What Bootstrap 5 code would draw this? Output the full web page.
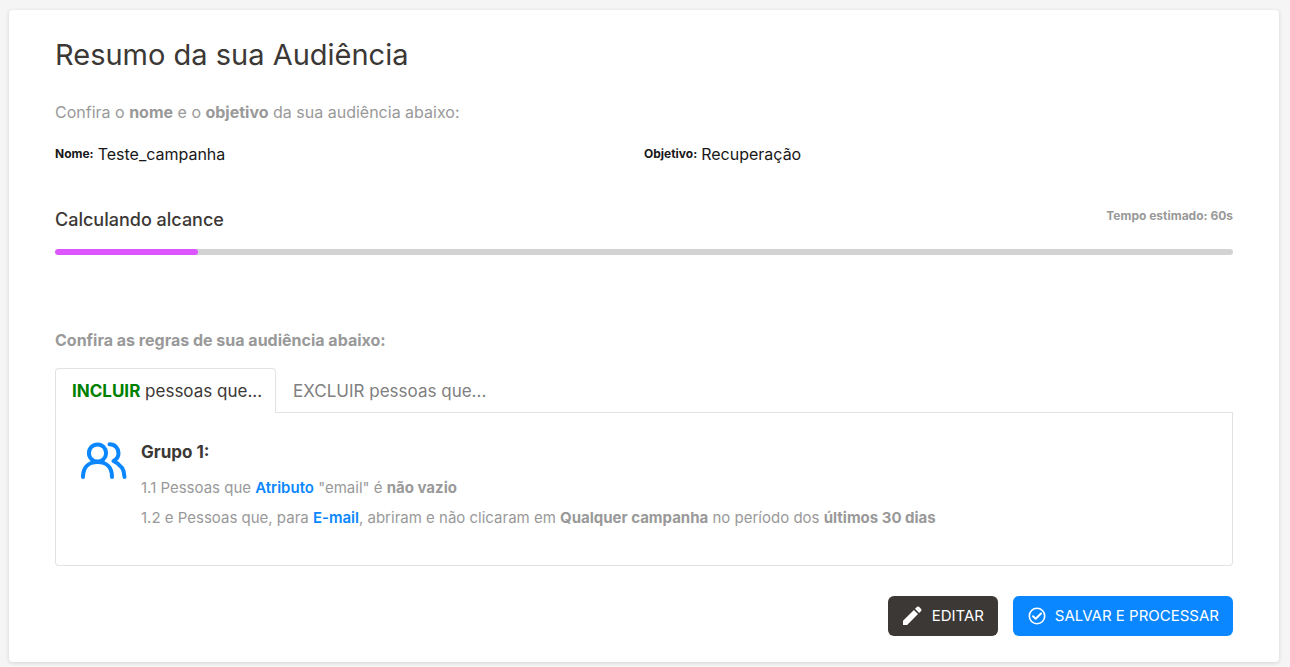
<!DOCTYPE html>
<html lang="pt-BR">
<head>
<meta charset="utf-8">
<meta name="viewport" content="width=device-width, initial-scale=1">
<title>Resumo da sua Audiência</title>
<link href="https://cdn.jsdelivr.net/npm/bootstrap@5.3.0/dist/css/bootstrap.min.css" rel="stylesheet">
<style>
body { background: #f5f5f5; color: #181818; font-family: Inter, "Liberation Sans", sans-serif; font-size: 15px; line-height: 24px; }
.summary { margin: 10px 11px 4px 9px; padding: 27px 46px 26px; border: 0; border-radius: 4px; box-shadow: 0 1px 4px rgba(0, 0, 0, .14); }
.summary h1 { font-size: 29px; line-height: 36px; font-weight: 400; color: #3b3835; margin-bottom: 27px; }
.summary h2 { font-size: 18px; line-height: 24px; font-weight: 500; margin: 0; }
.soft { color: #999; }
.intro { font-size: 16px; margin-bottom: 18px; }
.facts { margin-bottom: 42px; }
.facts dt, .eta { font-size: 12px; font-weight: 700; }
.facts dd { font-size: 16px; }
.reach h2 { color: #3b3835; }
.eta { line-height: 16px; }
.summary .progress { height: 6px; margin: 17px 0 73px; border-radius: 3px; background: #d3d3d3; }
.summary .progress-bar { background: #dd55ff; border-radius: 3px; }
.summary h2.rules-title { font-size: 16px; font-weight: 700; margin-bottom: 16px; }
.nav-tabs { --bs-nav-tabs-border-color: #e2e2e2; --bs-nav-tabs-border-radius: 4px; --bs-nav-tabs-link-active-border-color: #e2e2e2 #e2e2e2 #fff; --bs-nav-tabs-link-active-color: #3b3835; }
.nav-tabs .nav-link { padding: 10px 13px 9px 16px; font-size: 17px; color: #808080; }
.nav-tabs .nav-link.active { color: #3b3835; }
.include { color: #008000; }
.rules { border: 1px solid #e2e2e2; border-top: 0; border-radius: 0 0 4px 4px; padding: 24px 25px 32px; line-height: 30px; }
.rules h3 { font-size: 17px; line-height: 30px; font-weight: 700; color: #3b3835; margin-bottom: 6px; }
.rules a { color: #0a87ff; font-weight: 600; }
.people { width: 46px; height: 38px; margin: 5px 14px 0 0; color: #0a87ff; }
.strong-text { font-weight: 700; }
.actions { margin-top: 30px; gap: 15px; }
.actions .btn { height: 40px; padding: 0 14px; border: 0; border-radius: 6px; font-size: 15px; color: #fff; }
.btn-edit, .btn-edit:hover { background: #3b3835; min-width: 110px; }
.btn-save, .btn-save:hover { background: #0a87ff; min-width: 220px; }
</style>
</head>
<body>
<main class="card summary">
  <h1>Resumo da sua Audiência</h1>
  <p class="intro soft">Confira o <b>nome</b> e o <b>objetivo</b> da sua audiência abaixo:</p>
  <dl class="row g-0 facts">
    <div class="col-6 d-flex gap-1"><dt>Nome:</dt><dd class="mb-0">Teste_campanha</dd></div>
    <div class="col-6 d-flex gap-1"><dt>Objetivo:</dt><dd class="mb-0">Recuperação</dd></div>
  </dl>
  <section class="reach">
    <div class="d-flex justify-content-between align-items-start">
      <h2>Calculando alcance</h2>
      <span class="eta soft">Tempo estimado: 60s</span>
    </div>
    <div class="progress" role="progressbar" aria-label="Calculando alcance" aria-valuenow="12" aria-valuemin="0" aria-valuemax="100">
      <div class="progress-bar" style="width: 12.1%"></div>
    </div>
  </section>
  <h2 class="rules-title soft">Confira as regras de sua audiência abaixo:</h2>
  <ul class="nav nav-tabs" role="tablist">
    <li class="nav-item" role="presentation"><button class="nav-link active" type="button" role="tab" id="tab-include" data-bs-toggle="tab" data-bs-target="#include" aria-controls="include" aria-selected="true"><span class="include strong-text">INCLUIR</span> pessoas que...</button></li>
    <li class="nav-item" role="presentation"><button class="nav-link" type="button" role="tab" id="tab-exclude" data-bs-toggle="tab" data-bs-target="#exclude" aria-controls="exclude" aria-selected="false">EXCLUIR pessoas que...</button></li>
  </ul>
  <div class="tab-content rules">
    <div class="tab-pane active" id="include" role="tabpanel" aria-labelledby="tab-include">
      <div class="d-flex align-items-start">
        <svg class="people flex-shrink-0" viewBox="0 0 46 38" fill="none" stroke="currentColor" stroke-width="4" stroke-linecap="round" stroke-linejoin="round" aria-hidden="true">
          <circle cx="16.500" cy="11" r="8.600"/>
          <path d="M2 35C2 25 8 20 16.500 20S31 25 31 35"/>
          <path d="M28.500 2.200C34 2.200 37.500 6.500 37.500 11C37.500 14.500 35.500 17.500 32.500 19C39 22 43.500 27 43.500 35"/>
        </svg>
        <div>
          <h3>Grupo 1:</h3>
          <div class="soft">1.1 Pessoas que <a class="text-decoration-none" href="#">Atributo</a> "email" é <span class="strong-text">não vazio</span></div>
          <div class="soft">1.2 e Pessoas que, para <a class="text-decoration-none" href="#">E-mail</a>, abriram e não clicaram em <span class="strong-text">Qualquer campanha</span> no período dos <span class="strong-text">últimos 30 dias</span></div>
        </div>
      </div>
    </div>
    <div class="tab-pane" id="exclude" role="tabpanel" aria-labelledby="tab-exclude"></div>
  </div>
  <div class="d-flex justify-content-end actions">
    <button type="button" class="btn btn-edit d-flex align-items-center justify-content-between">
      <svg width="20" height="20" viewBox="0 0 20 20" fill="currentColor" aria-hidden="true"><path d="M1 14.800L11.900 3.900L16 8L5.100 19H1zM13 2.800L15 .800Q16 0 17 .800L19.100 2.900Q20 4 19.100 5L17.100 7z"/></svg>
      EDITAR
    </button>
    <button type="button" class="btn btn-save d-flex align-items-center justify-content-between">
      <svg width="20" height="20" viewBox="0 0 20 20" fill="none" stroke="currentColor" stroke-width="1.600" stroke-linecap="round" stroke-linejoin="round" aria-hidden="true"><circle cx="10" cy="10" r="7.700"/><path stroke-width="2" d="M6 10.300L8.700 12.800L14 7.500"/></svg>
      SALVAR E PROCESSAR
    </button>
  </div>
</main>
<script src="https://cdn.jsdelivr.net/npm/bootstrap@5.3.0/dist/js/bootstrap.bundle.min.js"></script>
</body>
</html>
